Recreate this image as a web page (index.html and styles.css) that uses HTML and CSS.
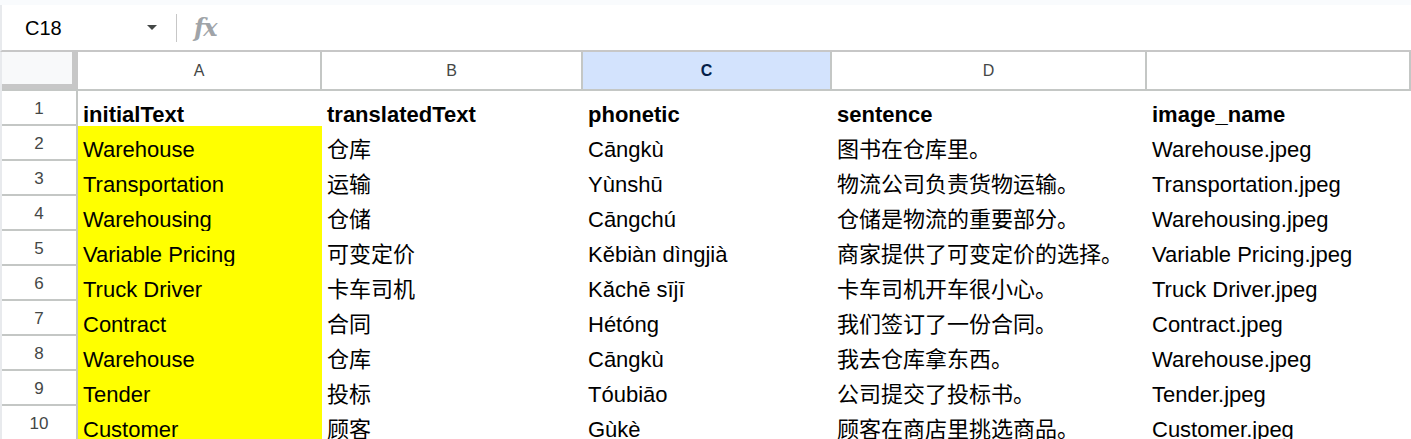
FILE: index.html
```html
<!DOCTYPE html>
<html>
<head>
<meta charset="utf-8">
<link rel="stylesheet" href="styles.css">
</head>
<body>
<div class="top"></div>
<div class="fbar">
  <div class="cellref">C18</div>
  <svg class="caret" width="10" height="5" viewBox="0 0 10 5"><path d="M0 0H10L5 5Z" fill="#444746"/></svg>
  <div class="sep"></div>
  <div class="fx">fx</div>
</div>
<div class="sheet">
  <div class="row colhead">
    <div class="corner"></div>
    <div class="ch">A</div>
    <div class="ch">B</div>
    <div class="ch sel">C</div>
    <div class="ch">D</div>
    <div class="ch"></div>
  </div>
  <div class="row"><div class="rh">1</div><div class="c b">initialText</div><div class="c b">translatedText</div><div class="c b">phonetic</div><div class="c b">sentence</div><div class="c b">image_name</div></div>
  <div class="row"><div class="rh">2</div><div class="c y">Warehouse</div><div class="c">仓库</div><div class="c">Cāngkù</div><div class="c">图书在仓库里。</div><div class="c">Warehouse.jpeg</div></div>
  <div class="row"><div class="rh">3</div><div class="c y">Transportation</div><div class="c">运输</div><div class="c">Yùnshū</div><div class="c">物流公司负责货物运输。</div><div class="c">Transportation.jpeg</div></div>
  <div class="row"><div class="rh">4</div><div class="c y">Warehousing</div><div class="c">仓储</div><div class="c">Cāngchú</div><div class="c">仓储是物流的重要部分。</div><div class="c">Warehousing.jpeg</div></div>
  <div class="row"><div class="rh">5</div><div class="c y">Variable Pricing</div><div class="c">可变定价</div><div class="c">Kěbiàn dìngjià</div><div class="c">商家提供了可变定价的选择。</div><div class="c">Variable Pricing.jpeg</div></div>
  <div class="row"><div class="rh">6</div><div class="c y">Truck Driver</div><div class="c">卡车司机</div><div class="c">Kǎchē sījī</div><div class="c">卡车司机开车很小心。</div><div class="c">Truck Driver.jpeg</div></div>
  <div class="row"><div class="rh">7</div><div class="c y">Contract</div><div class="c">合同</div><div class="c">Hétóng</div><div class="c">我们签订了一份合同。</div><div class="c">Contract.jpeg</div></div>
  <div class="row"><div class="rh">8</div><div class="c y">Warehouse</div><div class="c">仓库</div><div class="c">Cāngkù</div><div class="c">我去仓库拿东西。</div><div class="c">Warehouse.jpeg</div></div>
  <div class="row"><div class="rh">9</div><div class="c y">Tender</div><div class="c">投标</div><div class="c">Tóubiāo</div><div class="c">公司提交了投标书。</div><div class="c">Tender.jpeg</div></div>
  <div class="row"><div class="rh">10</div><div class="c y">Customer</div><div class="c">顾客</div><div class="c">Gùkè</div><div class="c">顾客在商店里挑选商品。</div><div class="c">Customer.jpeg</div></div>
</div>
</body>
</html>
```
FILE: styles.css
```css
* { box-sizing: border-box; }
body {
  margin: 0;
  width: 1411px;
  height: 439px;
  overflow: hidden;
  background: #fff;
  font-family: "Liberation Sans", Arial, "Noto Sans CJK SC", sans-serif;
  color: #000;
}
.top { height: 5px; background: #f9fbfd; }
.fbar {
  height: 47px;
  border-bottom: 2px solid #c7c7c7;
  border-left: 2px solid #e8eaed;
  display: flex;
  align-items: center;
}
.cellref {
  margin-left: 23px;
  width: 122px;
  font-size: 20px;
  color: #000;
  padding-top: 1px;
}
.caret { display: block; margin-top: -1px; }
.sep {
  width: 1px;
  height: 28px;
  background: #c7c7c7;
  margin-left: 19px;
}
.fx {
  margin-left: 17px;
  font-family: "DejaVu Serif", serif;
  font-style: italic;
  font-weight: bold;
  font-size: 24px;
  color: #a0a4a8;
  letter-spacing: -1px;
}
.sheet { border-left: 2px solid #e8eaed; }
.row {
  display: grid;
  grid-template-columns: 76px 244px 261px 249px 315px 1fr;
  height: 35px;
}
.row.colhead {
  height: 39px;
  border-bottom: 2px solid #c4c7c5;
}
.corner {
  background: #f8f9fa;
  border-right: 6px solid #c7c7c7;
  border-bottom: 5px solid #c7c7c7;
}
.ch {
  border-right: 2px solid #c4c7c5;
  display: flex;
  align-items: center;
  justify-content: center;
  font-size: 16px;
  color: #444746;
}
.ch.sel {
  background: #d3e3fd;
  color: #041e49;
  font-weight: bold;
}
.rh {
  border-right: 2px solid #c4c7c5;
  border-bottom: 2px solid #c4c7c5;
  display: flex;
  align-items: center;
  justify-content: center;
  padding-top: 2px;
  font-size: 17px;
  color: #444746;
}
.c {
  display: flex;
  align-items: flex-end;
  padding: 0 5px 0 5px;
  font-size: 22px;
  line-height: 22px;
  white-space: nowrap;
}
.c.b { font-weight: bold; }
.c.y { background: #ffff00; }
```
